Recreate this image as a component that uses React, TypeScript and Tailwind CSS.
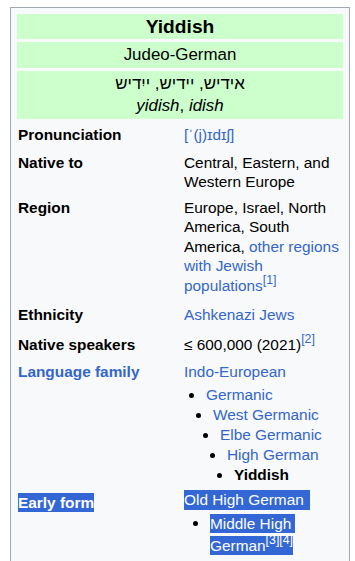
import React from 'react';

const link = 'text-[#3366cc]';
const sel = 'bg-[#3367d6] text-white';

const levels = ['ml-[5px]', 'ml-[12px]', 'ml-[19px]', 'ml-[26px]', 'ml-[33px]'];

const Item = ({ level, children }: { level: number; children: React.ReactNode }) => (
  <li className={`flex leading-[20px] ${levels[level]}`}>
    <span className="mt-[8px] mr-[12px] h-[5px] w-[5px] shrink-0 rounded-full bg-black" />
    <span>{children}</span>
  </li>
);

const Row = ({
  label,
  children,
  labelClass = '',
  cellClass = 'py-[3px]',
}: {
  label: React.ReactNode;
  children: React.ReactNode;
  labelClass?: string;
  cellClass?: string;
}) => (
  <tr>
    <th className={`w-[161px] pl-[1px] pr-[3px] text-left align-top font-bold ${cellClass} ${labelClass}`}>{label}</th>
    <td className={`pl-[3px] pr-[2px] align-top ${cellClass}`}>{children}</td>
  </tr>
);

const Ref = ({ n }: { n: string }) => (
  <sup className={`${link} text-[80%] leading-none`}>{n}</sup>
);

export default function App() {
  return (
    <div className="min-h-[561px] bg-white pt-[7px] pl-[10px] font-['Liberation_Sans',Arial,sans-serif] text-[15.4px] leading-[19.5px] text-[#202122]">
      <div className="w-[340px] border border-[#a2a9b1] bg-[#f8f9fa] p-[3px] text-black">
        <table className="w-full border-separate border-spacing-[3px]">
          <tbody>
            <tr>
              <th colSpan={2} className="bg-[#ccffcc] text-center text-[19.2px] leading-[25px] font-bold">Yiddish</th>
            </tr>
            <tr>
              <td colSpan={2} className="bg-[#ccffcc] py-[2px] text-center text-[16.9px] leading-[22px]">Judeo-German</td>
            </tr>
            <tr>
              <td colSpan={2} className="bg-[#ccffcc] py-[2px] text-center text-[16.9px] leading-[22px]">
                <div lang="yi">אידיש, יידיש, ייִדיש</div>
                <div><i>yidish</i>, <i>idish</i></div>
              </td>
            </tr>
            <Row label="Pronunciation">
              <span className={link}>[ˈ(j)ɪdɪʃ]</span>
            </Row>
            <Row label="Native to" cellClass="pt-[2px] pb-0">Central, Eastern, and Western Europe</Row>
            <Row label="Region" cellClass="pt-[3px] pb-[4px]">
              Europe, Israel, North America, South America,{' '}
              <span className={link}>other regions with Jewish populations</span>
              <Ref n="[1]" />
            </Row>
            <Row label="Ethnicity" cellClass="pt-[3px] pb-[4px]">
              <span className={link}>Ashkenazi Jews</span>
            </Row>
            <Row label="Native speakers" cellClass="pt-[3px] pb-[2px]">
              ≤ 600,000 (2021)
              <Ref n="[2]" />
            </Row>
            <Row label={<span className={link}>Language family</span>} cellClass="pt-[3px] pb-0">
              <div className={link}>Indo-European</div>
              <ul className={`mt-[3px] ${link}`}>
                <Item level={0}>Germanic</Item>
                <Item level={1}>West Germanic</Item>
                <Item level={2}>Elbe Germanic</Item>
                <Item level={3}>High German</Item>
                <Item level={4}>
                  <b className="text-black">Yiddish</b>
                </Item>
              </ul>
            </Row>
            <Row
              label={<span className={`${sel} inline-block mt-[3px] leading-[19px]`}>Early form</span>}
              cellClass="pt-[2px] pb-[3px]"
            >
              <span className={`${sel} inline-block pr-[6px] leading-[20px]`}>Old High German</span>
              <ul className="mt-[3px]">
                <li className="ml-[9px] flex">
                  <span className="mt-[8px] mr-[12px] h-[5px] w-[5px] shrink-0 rounded-full bg-black" />
                  <span className="leading-[22px]">
                    <span className={`${sel} pr-[4px] py-[1px]`}>Middle High</span>{' '}
                    <span className={`${sel} py-[1px]`}>
                      German
                      <sup className="text-[80%] leading-none">[3]</sup>
                      <sup className="text-[80%] leading-none">[4]</sup>
                    </span>
                  </span>
                </li>
              </ul>
            </Row>
          </tbody>
        </table>
      </div>
    </div>
  );
}
